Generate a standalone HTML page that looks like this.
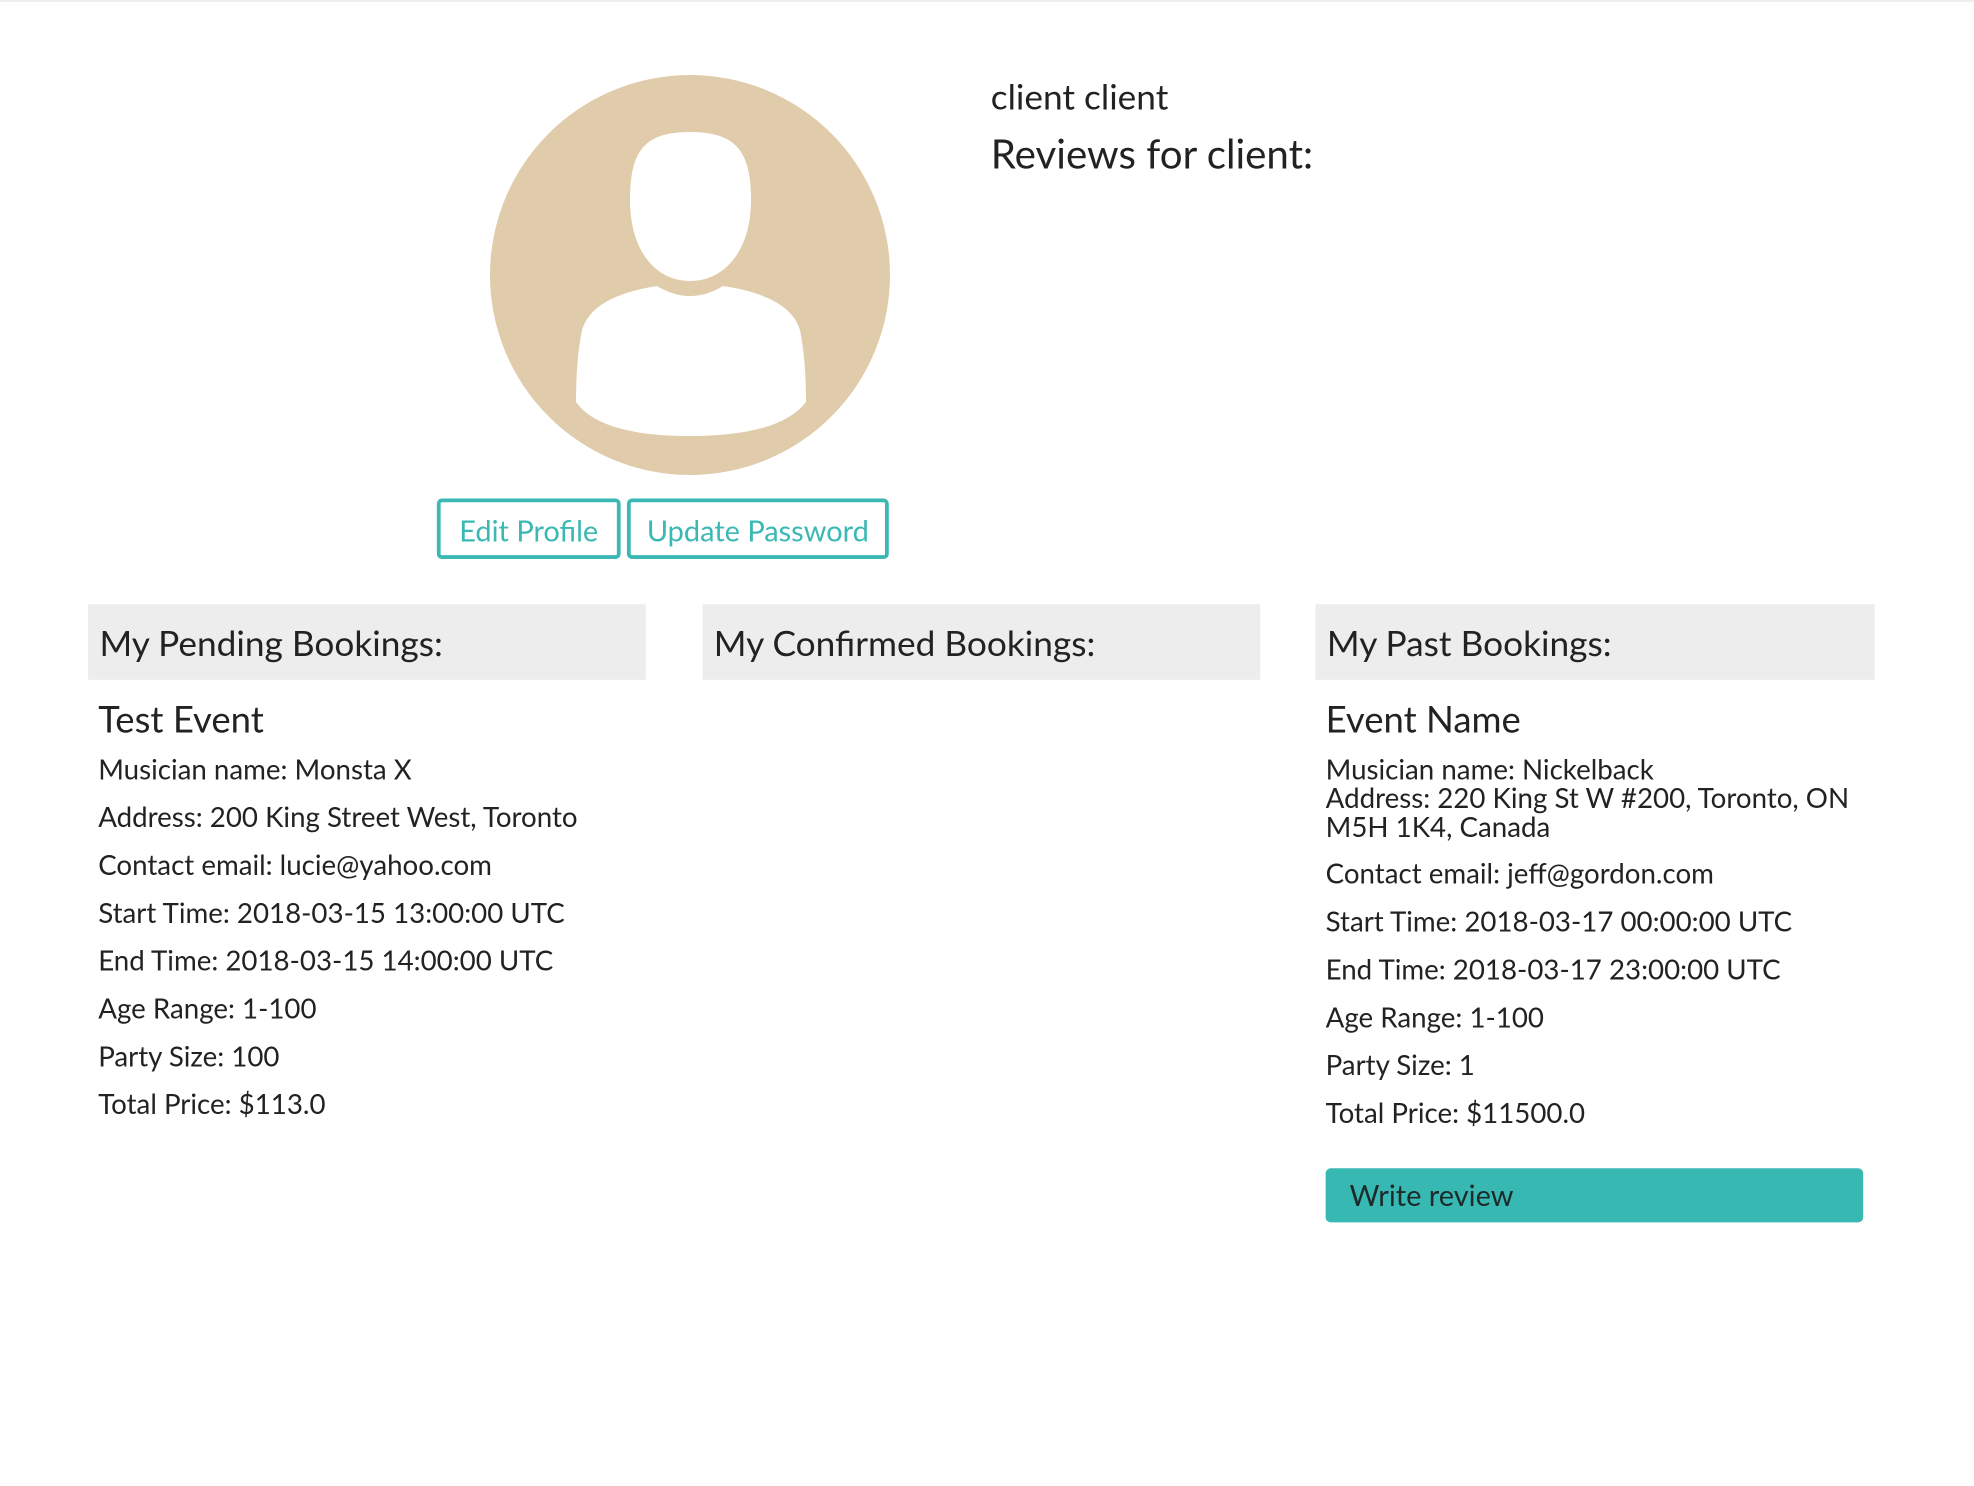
<!DOCTYPE html>
<html><head><meta charset="utf-8"><style>
html,body{margin:0;padding:0;background:#fff;width:1974px;height:1486px;overflow:hidden}
#w{position:absolute;left:0;top:0;width:1568px;height:1180px;transform:scale(1.2589);transform-origin:0 0;font-family:"Lato","Liberation Sans",sans-serif;color:#222}
.t{position:absolute;white-space:nowrap;line-height:1}
.d{font-size:22px}
.hb{position:absolute;top:480px;height:60px;width:443px;background:#ededed}
.hb span{position:absolute;left:9px;top:16px;font-size:28px;line-height:1}
.btn{position:absolute;top:396px;height:42px;border:3px solid #3ab8b3;border-radius:4px;color:#3ab8b3;font-size:23px;line-height:44px;text-align:center}
</style></head><body>
<div style="position:absolute;left:0;top:0;width:1974px;height:2px;background:#eee"></div>
<svg style="position:absolute;left:0;top:0" width="1974" height="600">
<circle cx="690" cy="275" r="200" fill="#e0cbaa"/>
<path d="M690 132 C735 132 751 150 751 200 C751 250 725 281 690 281 C655 281 630 250 630 200 C630 150 645 132 690 132 Z" fill="#fff"/>
<path d="M657 286 Q690 306 723 286 Q790 296 800 330 Q806 360 806 402 Q780 436 690 436 Q600 436 576 402 Q576 360 582 330 Q592 296 657 286 Z" fill="#fff"/>
</svg>
<div id="w">
<div class="t" style="left:787px;top:62px;font-size:28px">client client</div>
<div class="t" style="left:787px;top:106px;font-size:32px">Reviews for client:</div>
<div class="btn" style="left:347px;width:140px">Edit Profile</div>
<div class="btn" style="left:498px;width:202px">Update Password</div>
<div class="hb" style="left:70px"><span>My Pending Bookings:</span></div>
<div class="hb" style="left:558px"><span>My Confirmed Bookings:</span></div>
<div class="hb" style="left:1045px;width:444px"><span>My Past Bookings:</span></div>
<div class="t" style="left:78px;top:557px;font-size:29px">Test Event</div>
<div class="t d" style="left:78px;top:600px">Musician name: Monsta X</div>
<div class="t d" style="left:78px;top:638px">Address: 200 King Street West, Toronto</div>
<div class="t d" style="left:78px;top:676px">Contact email: lucie@yahoo.com</div>
<div class="t d" style="left:78px;top:714px">Start Time: 2018-03-15 13:00:00 UTC</div>
<div class="t d" style="left:78px;top:752px">End Time: 2018-03-15 14:00:00 UTC</div>
<div class="t d" style="left:78px;top:790px">Age Range: 1-100</div>
<div class="t d" style="left:78px;top:828px">Party Size: 100</div>
<div class="t d" style="left:78px;top:866px">Total Price: $113.0</div>
<div class="t" style="left:1053px;top:557px;font-size:29px">Event Name</div>
<div class="t d" style="left:1053px;top:600px">Musician name: Nickelback</div>
<div class="t d" style="left:1053px;top:623px">Address: 220 King St W #200, Toronto, ON</div>
<div class="t d" style="left:1053px;top:646px">M5H 1K4, Canada</div>
<div class="t d" style="left:1053px;top:683px">Contact email: jeff@gordon.com</div>
<div class="t d" style="left:1053px;top:721px">Start Time: 2018-03-17 00:00:00 UTC</div>
<div class="t d" style="left:1053px;top:759px">End Time: 2018-03-17 23:00:00 UTC</div>
<div class="t d" style="left:1053px;top:797px">Age Range: 1-100</div>
<div class="t d" style="left:1053px;top:835px">Party Size: 1</div>
<div class="t d" style="left:1053px;top:873px">Total Price: $11500.0</div>
<div style="position:absolute;left:1053px;top:928px;width:427px;height:43px;background:#37b8b3;border-radius:4px"></div>
<div class="t" style="left:1072px;top:938px;font-size:23px;color:#1c2a2a">Write review</div>
</div>
</body></html>
